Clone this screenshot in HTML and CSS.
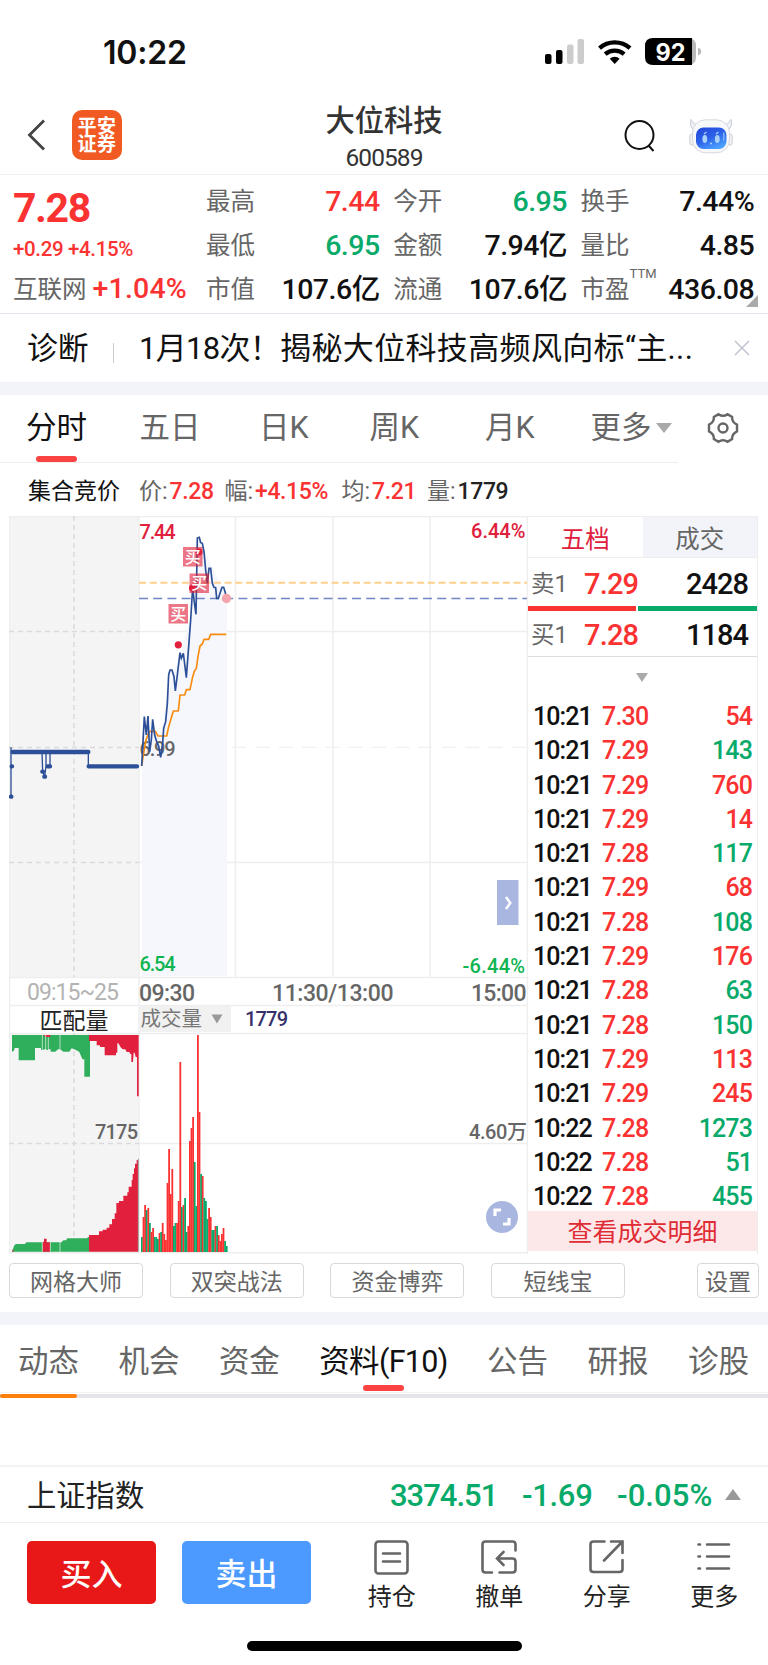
FILE: index.html
```html
<!DOCTYPE html>
<html lang="zh-CN">
<head>
<meta charset="UTF-8" />
<meta name="viewport" content="width=device-width, initial-scale=1" />
<title>大位科技 600589</title>
<link rel="stylesheet" href="styles.css">
</head>
<body>

<div class="status-bar">
  <span class="clock">10:22</span>
  <svg class="status-icons" width="158" height="28" viewBox="0 0 158 28">
    <rect x="0" y="16" width="6.5" height="10" rx="2"/>
    <rect x="11" y="12" width="6.5" height="14" rx="2"/>
    <rect x="22" y="6.500" width="6.500" height="19.500" rx="2" fill="#ccc"/>
    <rect x="32.500" y="1" width="6.500" height="25" rx="2" fill="#ccc"/>
    <path d="M54.500 10.200a23 23 0 0 1 30.500 0M60.200 16.200a14.500 14.500 0 0 1 19 0" fill="none" stroke="#000" stroke-width="4.300"/>
    <path d="M69.700 26l-4.900-5.300a7 7 0 0 1 9.800 0z"/>
    <path d="M108 0h35q8 0 8 8v11q0 8-8 8h-35z" fill="#b9b9b9"/>
    <path d="M108 0h39v27h-39q-8 0-8-8v-11q0-8 8-8z"/>
    <path d="M153 9.500q3.200 1.200 3.200 4t-3.200 4z" fill="#b9b9b9"/>
    <text x="110.500" y="22.500" textLength="30" lengthAdjust="spacingAndGlyphs" class="battery-text">92</text>
  </svg>
</div>

<div class="header">
  <svg class="back" width="20" height="32" viewBox="0 0 20 32"><path d="M17 1.500L2.500 16 17 30.500"/></svg>
  <div class="logo"><span>平安</span><span>证券</span></div>
  <div class="title">
    <h1>大位科技</h1>
    <p>600589</p>
  </div>
  <svg class="search" width="32" height="34" viewBox="0 0 32 34"><circle cx="15.500" cy="16" r="14"/><path d="M24.500 26.500l5 5.500"/></svg>
  <svg class="robot" width="44" height="36" viewBox="0 0 44 36">
    <defs>
      <linearGradient id="face" x1="0" y1="0" x2="0.600" y2="1">
        <stop offset="0" stop-color="#2346d8"/>
        <stop offset="0.550" stop-color="#2d62e8"/>
        <stop offset="1" stop-color="#4aa0ff"/>
      </linearGradient>
    </defs>
    <path d="M2 1.500q-2 7 3 10.500l6-5q-6 0-9-5.500zM42 1.500q2 7-3 10.500l-6-5q6 0 9-5.500z" fill="#eef1f6" stroke="#c8ccd6"/>
    <rect x="0.800" y="16" width="5" height="11" rx="2" fill="#f3f3f5" stroke="#cbccd3"/>
    <rect x="38.200" y="16" width="5" height="11" rx="2" fill="#f3f3f5" stroke="#cbccd3"/>
    <rect x="3.500" y="1.800" width="37" height="33" rx="13" fill="#f7f8fa" stroke="#d5d8df"/>
    <rect x="7" y="9.500" width="30.500" height="21.500" rx="7.500" fill="url(#face)"/>
    <path d="M34.500 14.500q1 4 0 8" stroke="#8db9ff" stroke-width="1.300" fill="none"/>
    <ellipse cx="15.800" cy="21" rx="2.400" ry="4" fill="#a9d2fb"/>
    <ellipse cx="28.300" cy="21" rx="2.400" ry="4" fill="#a9d2fb"/>
    <path d="M15 16l2.500-2M27 16l2.500-2M21 25.500h2" stroke="#a9d2fb" stroke-width="1.300"/>
  </svg>
</div>

<div class="quote">
  <div class="quote-main">
    <div class="price">7.28</div>
    <div class="change">+0.29 +4.15%</div>
    <div class="sector">互联网<span>+1.04%</span></div>
  </div>
  <div class="quote-grid">
    <div><label>最高</label><b class="red">7.44</b></div>
    <div><label>今开</label><b class="green">6.95</b></div>
    <div><label>换手</label><b>7.44%</b></div>
    <div><label>最低</label><b class="green">6.95</b></div>
    <div><label>金额</label><b>7.94亿</b></div>
    <div><label>量比</label><b>4.85</b></div>
    <div><label>市值</label><b>107.6亿</b></div>
    <div><label>流通</label><b>107.6亿</b></div>
    <div><label>市盈<sup>TTM</sup></label><b>436.08</b></div>
  </div>
</div>

<div class="news">
  <span class="news-tag">诊断</span>
  <span class="news-text">1月18次！<span>揭秘大位科技高频风向标“主...</span></span>
  <svg width="16" height="16" viewBox="0 0 16 16"><path d="M1 1l14 14M15 1L1 15"/></svg>
</div>

<div class="band"></div>

<div class="period-tabs">
  <span class="active">分时</span>
  <span>五日</span>
  <span>日K</span>
  <span>周K</span>
  <span>月K</span>
  <span class="more">更多<i></i></span>
  <svg width="32" height="32" viewBox="0 0 32 32"><path d="M11.500 2.200q4.500 3.200 9 0l4.600 2.700q-.3 5.300 4.900 7.800v6.600q-5.200 2.500-4.900 7.800l-4.600 2.700q-4.500-3.200-9 0l-4.600-2.700q.3-5.300-4.900-7.800v-6.600q5.200-2.500 4.900-7.800z"/><circle cx="16" cy="16" r="4.500"/></svg>
</div>

<div class="info">
  <span class="info-name">集合竞价</span>
  <span>价:<b class="red">7.28</b></span>
  <span>幅:<b class="red">+4.15%</b></span>
  <span>均:<b class="red">7.21</b></span>
  <span>量:<b>1779</b></span>
</div>

<div class="board">
  <svg class="chart" width="519" height="738" viewBox="9 516 519 738">
    <!-- call auction background -->
    <rect x="9" y="516" width="130" height="461" fill="#f4f4f4"/>
    <rect x="9" y="1033" width="130" height="219" fill="#f4f4f4"/>

    <!-- grid -->
    <path class="grid" d="M9.500 516v738M9 516.500h519M139 516v736M235.500 516v461M333 516v461M430 516v461M527.500 516v738M139 631.500h388M139 862.500h388M9 977.500h518M9 1005.500h518M9 1033.500h518M139 1143.500h388M9 1252.800h519"/>
    <path d="M139 747.300h388" stroke="#f0f0f0" stroke-width="1.300" stroke-dasharray="14 9.300"/>
    <path class="dash" d="M74 516v461M74 1033v219M9 631.500h130M9 747.500h130M9 862.500h130M9 1143.500h130"/>

    <!-- price -->
    <path d="M142 766V738L147 730L161 735L168 690L180 655L193 610L198 538L227 598V976H142z" fill="#f6f7fd"/>
    <text x="139.500" y="755.500" textLength="36" class="axis" fill="#666">6.99</text>
    <path d="M139 582.800h388" stroke="#ffcf8c" stroke-width="2" stroke-dasharray="7 3.700"/>
    <path d="M139 598.500h388" stroke="#7185c6" stroke-width="1.700" stroke-dasharray="9 5.200"/>

    <g transform="translate(0 510) scale(.33333)" fill="none" stroke-linejoin="round">
      <path stroke="#f88c10" stroke-width="5" d="M425 768L430 735L438 690L448 664H466L474 678H500L506 650L512 630L520 603H535L540 555H554L559 539H570L577 505L583 484L589 475L594 440L600 408L607 402L612 388H626L632 373H679"/>
      <path stroke="#2c4f97" stroke-width="5" stroke-linejoin="miter" d="M425 768L433 620L439 675L444 618L449 725L454 690L458 628L464 675L470 695L476 708L482 742L488 700L491 655L497 635L502 580L506 495L510 480H516L522 500L526 543L532 495L540 428L544 445L550 430L554 462L559 503L566 410L572 330L578 232L582 270L588 313L592 84L598 82L602 98L607 100L612 125L617 180L622 220L627 175H632L637 220L642 232L647 233L650 265H655L660 250L666 232H671L676 248L679 265"/>
      <path stroke="#2c4f97" stroke-width="4" d="M33 712V860M126 726L128 785L134 800L138 768M150 726V770M138 728V768M265 726V769"/>
      <path stroke="#2c4f97" stroke-width="13" stroke-linecap="round" d="M38 726H265M266 769H411M133 800H135M33 860H34M35 769H36M127 785H129M143 769H150"/>
    </g>

    <circle cx="226.500" cy="598.500" r="4.700" fill="#f4a5ac"/>
    <g fill="#e0203c">
      <circle cx="178.300" cy="644.800" r="3.600"/>
      <circle cx="192.500" cy="588" r="3.600"/>
      <g class="mark" fill-opacity=".62">
        <rect x="168.500" y="604" width="19.500" height="19.500"/>
        <rect x="183" y="547" width="19.500" height="19.500"/>
        <rect x="189.500" y="573.500" width="19.500" height="19.500"/>
      </g>
      <circle cx="199" cy="552" r="3.600"/>
    </g>
    <g class="mark-text">
      <text x="170.300" y="619.500">买</text>
      <text x="184.800" y="562.500">买</text>
      <text x="191.300" y="589">买</text>
    </g>

    <text x="139.500" y="539" textLength="36" class="axis" fill="#e0203c">7.44</text>
    <text x="471" y="537.500" textLength="54.500" class="axis" fill="#e0203c">6.44%</text>
    <text x="139.500" y="971" textLength="36" class="axis" fill="#10b552">6.54</text>
    <text x="462.500" y="972.500" textLength="62.500" class="axis" fill="#10b552">-6.44%</text>

    <rect x="497" y="880" width="21.500" height="45" fill="#a9b7e0"/>
    <path d="M506 897l4.300 6-4.300 6" fill="none" stroke="#fff" stroke-width="2.500"/>

    <!-- time axis -->
    <g class="time" fill="#666">
      <text x="27" y="1000" textLength="92" fill="#b3b3b3">09:15~25</text>
      <text x="139" y="1001" textLength="56" class="medium">09:30</text>
      <text x="272" y="1001" textLength="121.500" class="medium">11:30/13:00</text>
      <text x="471" y="1001" textLength="55.500" class="medium">15:00</text>
    </g>

    <!-- volume -->
    <rect x="139" y="1006" width="92" height="26" fill="#f1f1f1"/>
    <text x="39.500" y="1028.500" class="cjk" font-size="23" fill="#222">匹配量</text>
    <text x="140.500" y="1026" class="cjk" font-size="20.500" fill="#777">成交量</text>
    <path d="M211.500 1014.500h11l-5.500 9z" fill="#999"/>
    <text x="245" y="1025.500" textLength="43" class="axis" fill="#36306b">1779</text>

    <g transform="translate(0 960) scale(.33333)">
      <path fill="#2fae5b" d="M36 225H267H270V350H253V298H247L244 290L238 276L228 270L215 265L208 275H190L180 268H174L166 275H152V268H144V270H139V268H131V270H123V264H105V301H56V264H44L42 272L36 275z"/>
      <path fill="#e0203c" d="M132 225H151V231H141L132 228zM267 225H416V409H411V291H407L404 278H401L399 306H394V282H391L388 276H380L376 268H368L362 262L355 250H352V278H348V286H314V261H300V256H290V243H267z"/>
      <path fill="#2fae5b" d="M36 875L42 858L47 852H75L79 847H185L190 841H198L202 835H260L267 830V875z"/>
      <path fill="#e0203c" d="M36 875L40 866V875zM128 875V845H132V836H140V847H150V875zM267 875V825H297V814H308V809H320V803H328V793H336V777H344V760H349V729H357V723H370V707H382V697H386V680H395V660H398V642H402V625H405V611H410V600H414V875z"/>
      <path fill="none" stroke="#f4f4f4" stroke-width="2" d="M127 225V275M137 225V275M145 232V275M180 225V275M127 845V875M151 845V875M180 845V875"/>
      <path fill="none" stroke="#999" stroke-width="3" d="M415 596V875"/>
    </g>
    <g id="volume"></g>
    <text x="95" y="1139" textLength="43" class="axis" fill="#666">7175</text>
    <text x="469" y="1139" textLength="58" class="axis" fill="#666">4.60万</text>

    <circle cx="502" cy="1217" r="16" fill="#a9b7e0"/>
    <path d="M495 1216v-6h6M509 1218v6h-6" fill="none" stroke="#fff" stroke-width="3.200"/>
  </svg>

  <div class="side">
    <div class="side-tabs"><span class="on">五档</span><span>成交</span></div>
    <div class="level"><label>卖1</label><b class="red">7.29</b><em>2428</em></div>
    <div class="ratio"><i class="sell"></i><i class="buy"></i></div>
    <div class="level"><label>买1</label><b class="red">7.28</b><em>1184</em></div>
    <div class="expand"><i></i></div>
    <ul class="trades">
      <li><span>10:21</span><b>7.30</b><em class="red">54</em></li>
      <li><span>10:21</span><b>7.29</b><em class="green">143</em></li>
      <li><span>10:21</span><b>7.29</b><em class="red">760</em></li>
      <li><span>10:21</span><b>7.29</b><em class="red">14</em></li>
      <li><span>10:21</span><b>7.28</b><em class="green">117</em></li>
      <li><span>10:21</span><b>7.29</b><em class="red">68</em></li>
      <li><span>10:21</span><b>7.28</b><em class="green">108</em></li>
      <li><span>10:21</span><b>7.29</b><em class="red">176</em></li>
      <li><span>10:21</span><b>7.28</b><em class="green">63</em></li>
      <li><span>10:21</span><b>7.28</b><em class="green">150</em></li>
      <li><span>10:21</span><b>7.29</b><em class="red">113</em></li>
      <li><span>10:21</span><b>7.29</b><em class="red">245</em></li>
      <li><span>10:22</span><b>7.28</b><em class="green">1273</em></li>
      <li><span>10:22</span><b>7.28</b><em class="green">51</em></li>
      <li><span>10:22</span><b>7.28</b><em class="green">455</em></li>
    </ul>
    <div class="detail">查看成交明细</div>
  </div>
</div>

<div class="tools">
  <button>网格大师</button>
  <button>双突战法</button>
  <button>资金博弈</button>
  <button>短线宝</button>
  <button class="setting">设置</button>
</div>

<div class="band"></div>

<div class="section-tabs">
  <span>动态</span>
  <span>机会</span>
  <span>资金</span>
  <span class="active">资料(F10)</span>
  <span>公告</span>
  <span>研报</span>
  <span>诊股</span>
</div>
<div class="progress"><i></i></div>

<div class="index-bar">
  <span class="index-name">上证指数</span>
  <b class="i1">3374.51</b>
  <b class="i2">-1.69</b>
  <b class="i3">-0.05%</b>
  <i></i>
</div>

<div class="actions">
  <button class="buy-btn">买入</button>
  <button class="sell-btn">卖出</button>
  <div class="action">
    <svg width="36" height="36" viewBox="0 0 36 36"><rect x="1.500" y="1.500" width="32" height="32" rx="3"/><path d="M9 13.500h17M9 21.500h17"/></svg>
    <span>持仓</span>
  </div>
  <div class="action">
    <svg width="36" height="36" viewBox="0 0 36 36"><path d="M34.500 10.500V4.500q0-3-3-3h-27q-3 0-3 3v25q0 3 3 3h6.500M18.500 32.500h13q3 0 3-3V21.500q0-3-3-3H16M22.500 12l-6.500 6.500 6.500 6.500"/></svg>
    <span>撤单</span>
  </div>
  <div class="action">
    <svg width="36" height="36" viewBox="0 0 36 36"><path d="M15.500 1.500h-11q-3 0-3 3v24.500q0 3 3 3h26q3 0 3-3V20M22 1.500h11.500V13M33.500 1.500L15 20.500"/></svg>
    <span>分享</span>
  </div>
  <div class="action">
    <svg width="36" height="36" viewBox="0 0 36 36"><path d="M2.500 4.500h1.500M11 4.500h22M2.500 16.500h1.500M11 16.500h22M2.500 28.500h1.500M11 28.500h22"/></svg>
    <span>更多</span>
  </div>
</div>

<div class="home"></div>

<script>
  // one bar per minute, r = up, g = down
  const bars = 'g15 r35 r47 g42 r44 g29 r20 r24 g15 g15 g13 r19 g20 r29 r18 r12 r69 r103 r58 r83 g26 g29 r29 r51 r190 g45 r47 g54 g20 r26 r111 r124 r135 g90 g46 r217 r140 g78 r76 g54 g51 g33 r44 r35 g22 g22 r26 g26 r17 r11 r18 r24 g11 g6'.split(' ');
  const volume = document.getElementById('volume');
  bars.forEach((bar, i) => {
    const h = Number(bar.slice(1));
    const rect = document.createElementNS('http://www.w3.org/2000/svg', 'rect');
    rect.setAttribute('x', 141 + i * 1.6);
    rect.setAttribute('y', 1252 - h);
    rect.setAttribute('width', 1.8);
    rect.setAttribute('height', h);
    rect.setAttribute('fill', bar[0] === 'r' ? '#fb3232' : '#08aa6a');
    volume.appendChild(rect);
  });
</script>

</body>
</html>
```

FILE: styles.css
```css
* {
  box-sizing: border-box;
}
body {
  margin: 0;
  width: 768px;
  height: 1665px;
  overflow: hidden;
  background: #fff;
  color: #111;
  font-family: Roboto, "Noto Sans CJK SC", sans-serif;
}
h1, p, ul {
  margin: 0;
  padding: 0;
}
b, em, i {
  font-style: normal;
  font-weight: 500;
}
svg {
  display: block;
  flex: none;
}
.red {
  color: #fb3232;
}
.green {
  color: #08aa6a;
}

/* status bar */
.status-bar {
  display: flex;
  justify-content: space-between;
  height: 100px;
  padding: 38px 65px 0 103px;
}
.clock {
  font: 600 32px/29px Inter, sans-serif;
  letter-spacing: -0.2px;
}
.battery-text {
  font: 700 24px Inter, sans-serif;
  fill: #fff;
}

/* header */
.header {
  display: flex;
  height: 75px;
  padding-left: 27px;
  border-bottom: 1px solid #f2f2f4;
}
.back {
  margin-top: 19px;
  fill: none;
  stroke: #444;
  stroke-width: 2.8;
}
.logo {
  display: flex;
  flex-direction: column;
  width: 50px;
  height: 50px;
  margin: 10px 0 0 25px;
  padding-top: 8px;
  border-radius: 10px;
  background: #f15a22;
  color: #fff;
  font-size: 19px;
  font-weight: 700;
  line-height: 17.5px;
  letter-spacing: 0.5px;
  text-align: center;
}
.title {
  width: 200px;
  margin-left: 162px;
  text-align: center;
  color: #333;
}
.title h1 {
  margin-top: 3px;
  font-size: 29.3px;
  font-weight: 500;
  line-height: 36px;
}
.title p {
  margin-top: 4px;
  font-size: 24.5px;
  line-height: 30px;
  letter-spacing: -0.9px;
}
.search {
  margin: 19px 0 0 140px;
  fill: none;
  stroke: #111;
  stroke-width: 2;
}
.robot {
  margin: 18px 0 0 33px;
}

/* quote */
.quote {
  display: flex;
  position: relative;
  height: 139px;
  border-bottom: 1px solid #e6e6f0;
}
.quote::after {
  content: "";
  position: absolute;
  right: 10px;
  bottom: 6px;
  border-left: 12px solid transparent;
  border-bottom: 12px solid #aaa;
}
.quote-main {
  width: 206px;
  padding: 12px 0 0 13px;
  color: #fb3232;
}
.price {
  font-size: 41px;
  font-weight: 700;
  line-height: 43px;
  letter-spacing: -1.4px;
}
.change {
  margin-top: 4px;
  font-size: 20.5px;
  font-weight: 500;
  line-height: 30px;
  letter-spacing: -0.35px;
}
.sector {
  margin-top: 8px;
  color: #666;
  font-size: 24.5px;
  line-height: 34px;
  white-space: nowrap;
}
.sector span {
  margin-left: 6px;
  color: #fb3232;
  font-size: 28.5px;
  font-weight: 500;
  letter-spacing: 0.2px;
}
.quote-grid {
  display: grid;
  grid-template-columns: repeat(3, 173.7px);
  grid-template-rows: 45px 44px 43px;
  column-gap: 13.6px;
  padding-top: 4px;
}
.quote-grid div {
  display: flex;
  justify-content: space-between;
  align-items: center;
  line-height: 34px;
}
.quote-grid label {
  position: relative;
  color: #666;
  font-size: 24.5px;
}
.quote-grid sup {
  position: absolute;
  left: 49px;
  top: -16px;
  font-size: 13px;
}
.quote-grid b {
  font-size: 28.5px;
  letter-spacing: -0.5px;
}

/* diagnosis news */
.news {
  display: flex;
  align-items: center;
  height: 68px;
  padding: 2px 0 0 27px;
  line-height: 44px;
}
.news-tag {
  position: relative;
  width: 112px;
  font-size: 30.8px;
}
.news-tag::after {
  content: "";
  position: absolute;
  left: 86px;
  top: 16px;
  width: 1px;
  height: 20px;
  background: #ccc;
}
.news-text {
  width: 552px;
  font-size: 31px;
  letter-spacing: -0.7px;
  white-space: nowrap;
}
.news-text span {
  letter-spacing: 0.35px;
}
.news svg {
  margin: -2px 0 0 43px;
  fill: none;
  stroke: #bbbccc;
  stroke-width: 1.3;
}
.band {
  height: 13px;
  background: #f3f4f9;
}

/* period tabs */
.period-tabs {
  position: relative;
  display: flex;
  align-items: center;
  height: 68px;
  padding: 0 0 2px 26px;
  color: #666;
  font-size: 30.5px;
  line-height: 44px;
}
.period-tabs::before {
  content: "";
  position: absolute;
  left: 0;
  bottom: 0;
  width: 678px;
  height: 1px;
  background: #eee;
}
.period-tabs span {
  width: 113.5px;
  white-space: nowrap;
}
.period-tabs span:nth-child(2) {
  width: 119.5px;
}
.period-tabs span:nth-child(3) {
  width: 110.5px;
}
.period-tabs span:nth-child(4) {
  width: 115.5px;
}
.period-tabs span:nth-child(5) {
  width: 105.5px;
}
.period-tabs .more {
  display: flex;
  align-items: center;
  width: 116px;
}
.period-tabs .more i {
  margin-left: 4px;
  border: 8px solid transparent;
  border-top: 10px solid #aaa;
  border-bottom: 0;
}
.period-tabs .active {
  position: relative;
  color: #111;
}
.period-tabs .active::after {
  content: "";
  position: absolute;
  left: 10px;
  bottom: -12px;
  width: 41px;
  height: 6px;
  border-radius: 3px;
  background: #fb4343;
}
.period-tabs svg {
  fill: none;
  stroke: #666;
  stroke-width: 2.4;
}

/* price info */
.info {
  display: flex;
  height: 53px;
  padding-left: 28px;
  color: #666;
  font-size: 23px;
  line-height: 58px;
  white-space: nowrap;
}
.info span {
  width: 85.5px;
}
.info .info-name {
  width: 111px;
  color: #111;
}
.info span:nth-child(3) {
  width: 117px;
}
.info b {
  margin-left: 2px;
  letter-spacing: -0.4px;
}
.info b:not(.red) {
  color: #222;
}

/* chart board */
.board {
  display: flex;
  height: 738px;
  padding-left: 9px;
}
.grid {
  fill: none;
  stroke: #eeeeef;
  stroke-width: 1.5;
}
.dash {
  fill: none;
  stroke: #dadada;
  stroke-width: 1.5;
  stroke-dasharray: 5 4;
}
.axis {
  font-size: 20px;
  font-weight: 500;
}
.time {
  font-size: 23px;
}
.medium {
  font-weight: 500;
}
.cjk {
  font-family: "Noto Sans CJK SC", sans-serif;
}
.mark-text {
  font: 500 16px "Noto Sans CJK SC", sans-serif;
  fill: #fff;
}

/* side panel */
.side {
  width: 230px;
  border-top: 1px solid #eee;
  border-right: 1px solid #eee;
}
.side-tabs {
  display: flex;
  height: 41px;
  border-bottom: 1px solid #eee;
  font-size: 24.5px;
  line-height: 45px;
  text-align: center;
  color: #666;
}
.side-tabs span {
  flex: 1;
  background: #f3f4f9;
}
.side-tabs .on {
  background: #fff;
  color: #e0203c;
}
.level {
  display: flex;
  align-items: center;
  height: 48px;
  padding: 4px 9px 0 3px;
  font-size: 29px;
  line-height: 40px;
}
.ratio + .level {
  padding-top: 0;
}
.level label {
  width: 53px;
  color: #666;
  font-size: 23.5px;
}
.level b {
  letter-spacing: -0.8px;
}
.level em {
  flex: 1;
  text-align: right;
  letter-spacing: -1px;
}
.ratio {
  display: flex;
  gap: 2px;
  height: 5px;
}
.ratio .sell {
  width: 108px;
  background: #fb3232;
}
.ratio .buy {
  flex: 1;
  background: #08aa6a;
}
.expand {
  display: flex;
  justify-content: center;
  height: 43px;
  margin-top: -3px;
  padding-top: 16px;
  border-top: 1px solid #ddd;
}
.expand i {
  height: 0;
  margin-right: 2px;
  border: 6px solid transparent;
  border-top: 9px solid #aaa;
  border-bottom: 0;
}
.trades {
  list-style: none;
  height: 512px;
}
.trades li {
  display: flex;
  height: 34.3px;
  padding: 0 5px 0 5px;
  font-size: 25px;
  line-height: 36px;
}
.trades span {
  width: 69px;
  letter-spacing: -0.9px;
  font-weight: 500;
}
.trades b {
  color: #fb3232;
  letter-spacing: -0.8px;
}
.trades em {
  flex: 1;
  text-align: right;
  letter-spacing: -0.9px;
}
.detail {
  height: 40px;
  background: #fce8e9;
  color: #e02c35;
  font-size: 25px;
  line-height: 44px;
  text-align: center;
}

/* tool buttons */
.tools {
  display: flex;
  gap: 26.7px;
  height: 58px;
  padding: 9px 9px 0;
}
.tools button {
  width: 134px;
  height: 35px;
  padding: 4px 0 0;
  border: 1px solid #d9d9d9;
  border-radius: 4px;
  background: #fff;
  color: #666;
  font: 23px/30px Roboto, "Noto Sans CJK SC", sans-serif;
}
.tools .setting {
  width: 62px;
  margin-left: auto;
}

/* section tabs */
.section-tabs {
  display: flex;
  justify-content: space-between;
  height: 68px;
  padding: 0 19px 0 18px;
  border-bottom: 1px solid #f2f2f2;
  color: #666;
  font-size: 30.5px;
  line-height: 73px;
}
.section-tabs .active {
  position: relative;
  color: #111;
  letter-spacing: -0.7px;
}
.section-tabs .active::after {
  content: "";
  position: absolute;
  left: 50%;
  bottom: 1px;
  width: 41px;
  height: 6px;
  margin-left: -20px;
  border-radius: 3px;
  background: #fb4343;
}
.progress {
  height: 4px;
  margin-top: 1px;
  background: #e4e5e8;
}
.progress i {
  display: block;
  width: 77px;
  height: 4px;
  border-radius: 2px;
  background: #ff7f0e;
}

/* index */
.index-bar {
  display: flex;
  align-items: center;
  height: 58px;
  margin-top: 67px;
  padding: 3px 27px 0 27px;
  border-top: 2px solid #f3f4f7;
  border-bottom: 1px solid #eeeff5;
  font-size: 31px;
  line-height: 44px;
}
.index-name {
  width: 363px;
  font-size: 29.3px;
  color: #222;
}
.index-bar b {
  color: #08aa6a;
  letter-spacing: -1px;
}
.index-bar .i1 {
  width: 132px;
}
.index-bar .i2 {
  width: 95px;
  letter-spacing: -0.3px;
}
.index-bar .i3 {
  letter-spacing: 0.1px;
}
.index-bar i {
  margin: 0 0 4px auto;
  border: 8px solid transparent;
  border-top: 0;
  border-bottom: 11px solid #999;
}

/* bottom actions */
.actions {
  display: flex;
  height: 117px;
  padding: 18px 0 0 27px;
}
.actions button {
  width: 129px;
  height: 63px;
  margin-right: 26px;
  padding: 4px 0 0;
  border: 0;
  border-radius: 5px;
  color: #fff;
  font: 500 31px/60px Roboto, "Noto Sans CJK SC", sans-serif;
}
.buy-btn {
  background: #e91818;
}
.actions .sell-btn {
  margin-right: 27px;
  background: #4c9aff;
}
.action {
  display: flex;
  flex-direction: column;
  align-items: center;
  width: 107.5px;
  font-size: 24px;
  line-height: 34px;
  color: #222;
}
.action svg {
  margin: -1px 0 4px;
  fill: none;
  stroke: #666;
  stroke-width: 2.6;
  stroke-linecap: round;
}
.home {
  width: 275px;
  height: 10px;
  margin: 1px auto 0;
  border-radius: 5px;
  background: #000;
}
```
